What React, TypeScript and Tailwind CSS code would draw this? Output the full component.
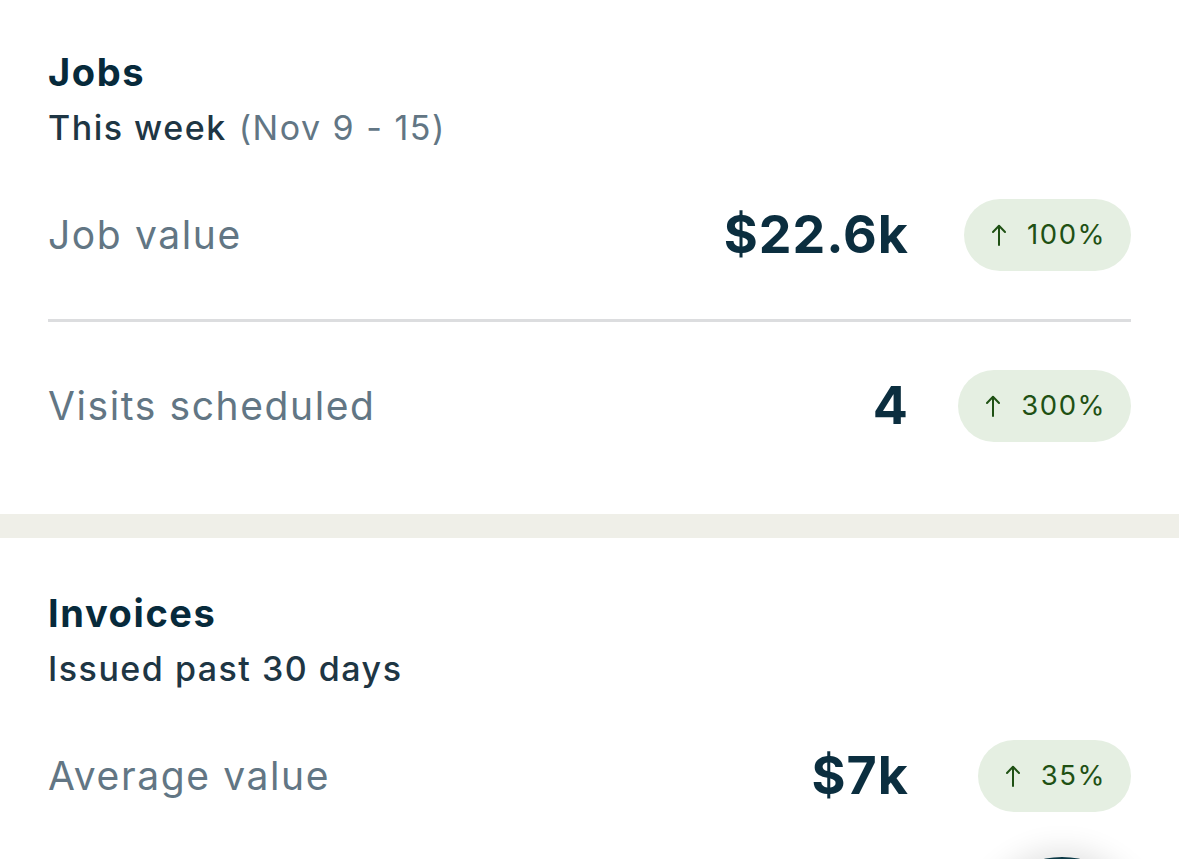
type Stat = { label: string; value: string; change: string };

function UpArrow() {
  return (
    <svg width="14" height="22" viewBox="0 0 14 22" fill="none" stroke="currentColor" strokeWidth="2" strokeLinecap="round" strokeLinejoin="round">
      <path d="M7 21V2" />
      <path d="M1 8l6-6.2L13 8" />
    </svg>
  );
}

function Badge({ change }: { change: string }) {
  return (
    <span className="inline-flex h-[72px] items-center gap-[21px] rounded-full bg-[#e5efe2] pl-[28px] pr-[25px] text-[27.5px] tracking-[1.5px] text-[#1f5114]">
      <UpArrow />
      {change}
    </span>
  );
}

function StatRow({ label, value, change }: Stat) {
  return (
    <div className="flex h-[72px] items-center">
      <p className="flex-1 text-[39px] tracking-[1.6px] text-[#627684]">{label}</p>
      <p className="text-[52px] font-bold tracking-[1px] text-[#0b2e3f]">{value}</p>
      <div className="flex w-[222px] justify-end">
        <Badge change={change} />
      </div>
    </div>
  );
}

function Section({ title, subtitle, extra, children, className }: { title: string; subtitle: string; extra?: string; children: React.ReactNode; className?: string }) {
  return (
    <section className={`px-[48px] ${className ?? ""}`}>
      <h2 className="text-[38px] leading-[44px] font-bold tracking-[1.6px] text-[#072a3b]">{title}</h2>
      <p className="mt-[12px] text-[34px] leading-[44px] font-medium tracking-[1.5px] text-[#1e3644]">
        {subtitle}
        {extra && <span className="ml-[12px] font-normal text-[#627684]">{extra}</span>}
      </p>
      <div className="mt-[49px]">{children}</div>
    </section>
  );
}

export default function App() {
  return (
    <div className="relative h-[859px] overflow-hidden bg-white font-['Inter',sans-serif]">
      <Section title="Jobs" subtitle="This week" extra="(Nov 9 - 15)" className="pt-[50px] pb-[72px]">
        <StatRow label="Job value" value="$22.6k" change="100%" />
        <div className="my-[48px] h-[3px] bg-[#dcdddf]" />
        <StatRow label="Visits scheduled" value="4" change="300%" />
      </Section>
      <div className="h-[24px] bg-[#efefe8]" />
      <Section title="Invoices" subtitle="Issued past 30 days" className="pt-[53px]">
        <StatRow label="Average value" value="$7k" change="35%" />
      </Section>
      <div className="absolute left-[978px] top-[857px] h-[168px] w-[168px] rounded-full bg-[#0d3a47] shadow-[0_-6px_30px_rgba(0,0,0,0.12)]" />
    </div>
  );
}
